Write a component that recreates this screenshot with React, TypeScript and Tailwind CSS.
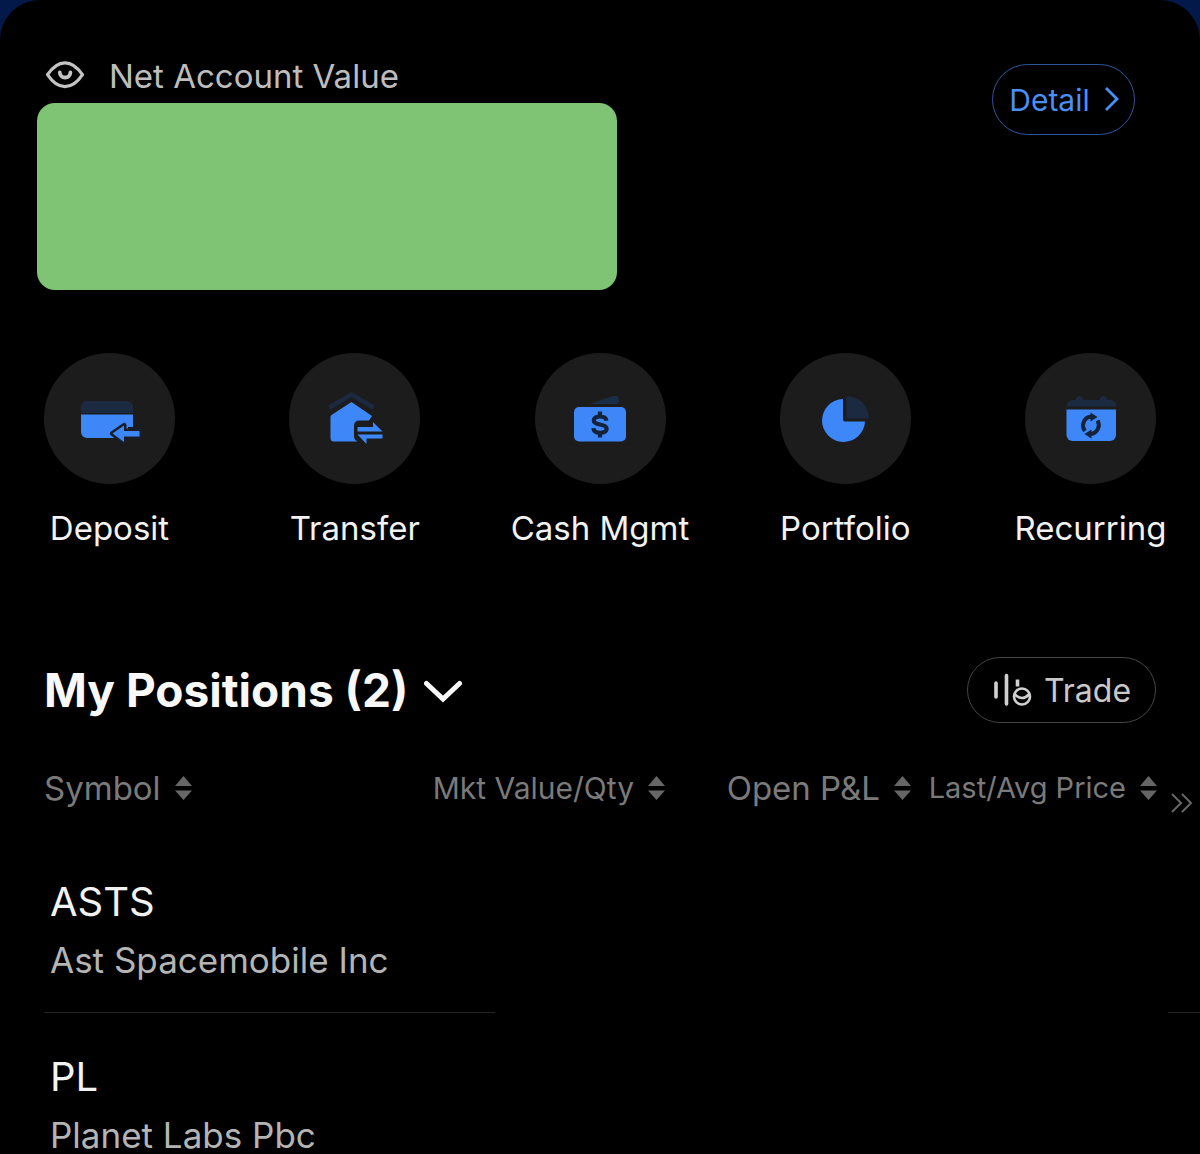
import type { ReactNode } from 'react';

interface Action {
  label: string;
  icon: ReactNode;
}

interface Position {
  symbol: string;
  name: string;
}

function EyeIcon() {
  return (
    <svg className="w-10 h-8" viewBox="0 0 40 32" fill="none" stroke="#c4c4c4" strokeWidth="3.200" aria-hidden="true">
      <path
        d="M2.500 14.700C8 6.500 13 2.800 20 2.800s12 3.700 17.500 11.900C32 23 27 26.700 20 26.700S8 23 2.500 14.700z"
        strokeLinejoin="round"
      />
      <path d="M14.800 12.500a5.300 5 0 0 0 10.600 0" strokeWidth="3.800" strokeLinecap="round" />
    </svg>
  );
}

function DepositIcon() {
  return (
    <svg className="w-16 h-16" viewBox="0 0 64 64" aria-hidden="true">
      <path d="M3 26v-6a6 6 0 0 1 6-6h40a6 6 0 0 1 6 6v6z" fill="#1b2a41" />
      <path d="M3 27.500h52V40h-5v11H9a6 6 0 0 1-6-6z" fill="#3d87f8" />
      <path
        d="M34.500 46.500L46 38.500V44h15.500v5.500H46V55z"
        fill="#3d87f8"
        stroke="#191e2a"
        strokeWidth="5"
        strokeLinejoin="round"
        className="[paint-order:stroke]"
      />
    </svg>
  );
}

function TransferIcon() {
  return (
    <svg className="w-16 h-16" viewBox="0 0 64 64" aria-hidden="true">
      <path d="M6.500 20.500L28.500 7.500l22 13" fill="none" stroke="#1b2a41" strokeWidth="4.500" />
      <path
        d="M8.500 28L28.500 15 49 29l-3 4.500h-9.500q-5.500 0-5.500 5.500v10q0 3.500 3.500 5.500H11a3.500 3.500 0 0 1-3.500-3.500V29.500z"
        fill="#3d87f8"
      />
      <path d="M34.500 40H50v-5l9.500 9.500h-25z" fill="#3d87f8" />
      <path d="M59.500 47.500h-25l9 9.500v-5.500h16z" fill="#3d87f8" />
    </svg>
  );
}

function CashIcon() {
  return (
    <svg className="w-16 h-16" viewBox="0 0 64 64" aria-hidden="true">
      <path d="M22 17l23-8q5-1 6 4 .5 4-3 4H22z" fill="#1a2f45" />
      <rect x="6" y="20" width="52" height="34.500" rx="5" fill="#3d87f8" />
      <path
        d="M38.400 33.800c-.3-2.800-2.800-4.300-6.400-4.300s-6.200 1.500-6.200 4c0 2.700 2.700 3.400 6.200 4s6.600 1.600 6.600 4.300-2.800 4-6.600 4-6.400-1.700-6.600-4.700M32 24.500v5M32 45.500v5"
        fill="none"
        stroke="#14223a"
        strokeWidth="4.200"
      />
    </svg>
  );
}

function PortfolioIcon() {
  return (
    <svg className="w-16 h-16" viewBox="0 0 64 64" aria-hidden="true">
      <path d="M33.500 9A22.500 22.500 0 0 1 56 31.500H33.500z" fill="#1b2a41" />
      <path d="M30 12a21.500 21.500 0 1 0 22 22.500H32a2 2 0 0 1-2-2z" fill="#3d87f8" />
    </svg>
  );
}

function RecurringIcon() {
  return (
    <svg className="w-16 h-16" viewBox="0 0 64 64" aria-hidden="true">
      <path d="M7.500 19.500q1-6.500 6-6.500h3.500q0-4 3.500-4t3.500 4h17q0-4 3.500-4t3.500 4h3.500q5 0 6 6.500z" fill="#1b2a41" />
      <path d="M7.500 22.500H57V48a6 6 0 0 1-6 6H13.500a6 6 0 0 1-6-6z" fill="#3d87f8" />
      <g fill="none" stroke="#14223a" strokeWidth="4">
        <path d="M26 44a9 9 0 0 1 6-14.500" />
        <path d="M38.500 33.500A9 9 0 0 1 32 47" />
      </g>
      <path d="M31.500 25.500l7 4.500-7 4.500zM32.500 51.500l-7-4.500 7-4.500z" fill="#14223a" />
    </svg>
  );
}

function TradeIcon() {
  return (
    <svg className="w-10 h-9" viewBox="0 0 40 36" fill="none" stroke="#d0d0d0" aria-hidden="true">
      <path d="M4 10v14M14.500 2.500v28.500" strokeWidth="3.600" strokeLinecap="round" />
      <path d="M25.500 6.500v7" strokeWidth="3.600" />
      <circle cx="30" cy="23.500" r="8" strokeWidth="2.600" />
      <path d="M22.500 21q7.500 8 15 0" strokeWidth="2.600" />
    </svg>
  );
}

function SortIcon() {
  return (
    <svg className="w-[17px] h-6 shrink-0" viewBox="0 0 17 24" fill="#666" aria-hidden="true">
      <path d="M0 10L8.500 0 17 10zM0 14.500h17L8.500 24z" />
    </svg>
  );
}

const actions: Action[] = [
  { label: 'Deposit', icon: <DepositIcon /> },
  { label: 'Transfer', icon: <TransferIcon /> },
  { label: 'Cash Mgmt', icon: <CashIcon /> },
  { label: 'Portfolio', icon: <PortfolioIcon /> },
  { label: 'Recurring', icon: <RecurringIcon /> },
];

const positions: Position[] = [
  { symbol: 'ASTS', name: 'Ast Spacemobile Inc' },
  { symbol: 'PL', name: 'Planet Labs Pbc' },
];

function SortButton({ label }: { label: string }) {
  return (
    <button type="button" className="flex items-center gap-3.5 whitespace-nowrap leading-10">
      {label}
      <SortIcon />
    </button>
  );
}

function AccountSummary() {
  return (
    <section className="flex items-start justify-between pl-[37px] pr-[65px] pt-14">
      <div className="w-[580px]">
        <div className="flex h-[47px] items-start gap-6 pl-2">
          <button type="button" aria-label="Hide account value" className="pt-1">
            <EyeIcon />
          </button>
          <h2 className="text-[33px] leading-10 text-[#bdbdbd]">Net Account Value</h2>
        </div>
        <div className="h-[187px] rounded-[18px] bg-[#7fc474]" />
      </div>
      <button
        type="button"
        className="mt-2 flex h-[71px] w-[143px] items-center justify-center gap-3.5 rounded-full border border-[#2f549f] pl-0.5 pt-0.5 text-[30px] text-[#4a8ff5]"
      >
        Detail
        <svg className="w-4 h-6 mb-1" viewBox="0 0 16 24" fill="none" stroke="currentColor" strokeWidth="2.800" aria-hidden="true">
          <path d="M2 1l11 11L2 23" />
        </svg>
      </button>
    </section>
  );
}

function QuickActions() {
  return (
    <nav className="flex justify-between px-11 pt-[63px]">
      {actions.map((action) => (
        <button key={action.label} type="button" className="flex w-[131px] flex-col items-center gap-6">
          <span className="flex h-[131px] w-[131px] items-center justify-center rounded-full bg-[#1c1c1c]">
            {action.icon}
          </span>
          <span className="whitespace-nowrap text-[33px] leading-10 text-[#f2f2f2]">{action.label}</span>
        </button>
      ))}
    </nav>
  );
}

function Positions() {
  return (
    <section className="pt-[109px]">
      <div className="flex items-center justify-between px-11">
        <button type="button" className="flex items-center gap-4">
          <h2 className="text-[46px] font-bold leading-[66px] text-[#f8f8f8]">My Positions (2)</h2>
          <svg className="w-[38px] h-7" viewBox="0 0 38 28" fill="none" stroke="#f8f8f8" strokeWidth="5" aria-hidden="true">
            <path d="M2.500 7.500L19 23 35.500 7.500" strokeLinecap="round" />
          </svg>
        </button>
        <button
          type="button"
          className="flex h-[66px] w-[189px] items-center justify-center gap-3 rounded-full border border-[#444] pt-0.5 text-[32px] text-[#c8c8c8]"
        >
          <TradeIcon />
          Trade
        </button>
      </div>

      <div className="pl-11 pt-[45px]">
        <table className="w-full table-fixed text-left">
          <colgroup>
            <col />
            <col className="w-[170px]" />
            <col className="w-[246px]" />
            <col className="w-[257px]" />
            <col className="w-[32px]" />
          </colgroup>
          <thead className="text-[#7a7a7a]">
            <tr className="h-[98px] align-top">
              <th className="p-0 text-[33px] font-normal">
                <SortButton label="Symbol" />
              </th>
              <th className="p-0 text-[30px] font-normal">
                <div className="flex justify-end">
                  <SortButton label="Mkt Value/Qty" />
                </div>
              </th>
              <th className="p-0 text-[33px] font-normal">
                <div className="flex justify-end">
                  <SortButton label="Open P&amp;L" />
                </div>
              </th>
              <th className="p-0 pr-[11px] text-[29px] font-normal">
                <div className="flex justify-end">
                  <SortButton label="Last/Avg Price" />
                </div>
              </th>
              <th className="p-0 pt-6">
                <button type="button" aria-label="More columns" className="block pl-0.5">
                  <svg className="w-6 h-6" viewBox="0 0 24 24" fill="none" stroke="#666" strokeWidth="2" aria-hidden="true">
                    <path d="M2 2l9 9-9 9M12 2l9 9-9 9" />
                  </svg>
                </button>
              </th>
            </tr>
          </thead>
          <tbody>
            {positions.map((position) => (
              <tr key={position.symbol} className="group">
                <td className="border-b border-[#242424] p-0 pb-8 pl-1.5 pt-2 group-last:border-0 group-last:pb-0 group-[:not(:first-child)]:pt-9">
                  <div className="text-[40px] leading-[56px] text-[#f2f2f2]">{position.symbol}</div>
                  <div className="pt-2.5 text-[35px] leading-10 text-[#b4b4b4]">{position.name}</div>
                </td>
                <td />
                <td />
                <td />
                <td className="border-b border-[#242424] group-last:border-0" />
              </tr>
            ))}
          </tbody>
        </table>
      </div>
    </section>
  );
}

export default function App() {
  return (
    <div className="bg-[#03194a] font-['Inter',sans-serif]">
      <main className="overflow-hidden rounded-t-[40px] bg-black">
        <AccountSummary />
        <QuickActions />
        <Positions />
      </main>
    </div>
  );
}
